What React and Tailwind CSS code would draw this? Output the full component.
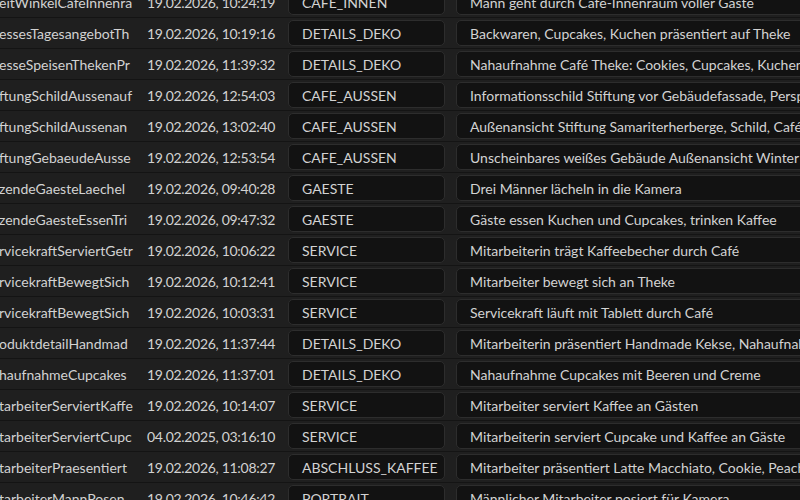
import React from 'react';

const rows = [
  ['eitWinkelCafeInnenra', '19.02.2026, 10:24:19', 'CAFE_INNEN', 'Mann geht durch Café-Innenraum voller Gäste'],
  ['essesTagesangebotTh', '19.02.2026, 10:19:16', 'DETAILS_DEKO', 'Backwaren, Cupcakes, Kuchen präsentiert auf Theke'],
  ['esseSpeisenThekenPr', '19.02.2026, 11:39:32', 'DETAILS_DEKO', 'Nahaufnahme Café Theke: Cookies, Cupcakes, Kuchen, Getränke'],
  ['ftungSchildAussenauf', '19.02.2026, 12:54:03', 'CAFE_AUSSEN', 'Informationsschild Stiftung vor Gebäudefassade, Perspektive'],
  ['ftungSchildAussenan', '19.02.2026, 13:02:40', 'CAFE_AUSSEN', 'Außenansicht Stiftung Samariterherberge, Schild, Café'],
  ['ftungGebaeudeAusse', '19.02.2026, 12:53:54', 'CAFE_AUSSEN', 'Unscheinbares weißes Gebäude Außenansicht Winter'],
  ['zendeGaesteLaechel', '19.02.2026, 09:40:28', 'GAESTE', 'Drei Männer lächeln in die Kamera'],
  ['zendeGaesteEssenTri', '19.02.2026, 09:47:32', 'GAESTE', 'Gäste essen Kuchen und Cupcakes, trinken Kaffee'],
  ['rvicekraftServiertGetr', '19.02.2026, 10:06:22', 'SERVICE', 'Mitarbeiterin trägt Kaffeebecher durch Café'],
  ['rvicekraftBewegtSich', '19.02.2026, 10:12:41', 'SERVICE', 'Mitarbeiter bewegt sich an Theke'],
  ['rvicekraftBewegtSich', '19.02.2026, 10:03:31', 'SERVICE', 'Servicekraft läuft mit Tablett durch Café'],
  ['oduktdetailHandmad', '19.02.2026, 11:37:44', 'DETAILS_DEKO', 'Mitarbeiterin präsentiert Handmade Kekse, Nahaufnahme'],
  ['haufnahmeCupcakes', '19.02.2026, 11:37:01', 'DETAILS_DEKO', 'Nahaufnahme Cupcakes mit Beeren und Creme'],
  ['tarbeiterServiertKaffe', '19.02.2026, 10:14:07', 'SERVICE', 'Mitarbeiter serviert Kaffee an Gästen'],
  ['tarbeiterServiertCupc', '04.02.2025, 03:16:10', 'SERVICE', 'Mitarbeiterin serviert Cupcake und Kaffee an Gäste'],
  ['tarbeiterPraesentiert', '19.02.2026, 11:08:27', 'ABSCHLUSS_KAFFEE', 'Mitarbeiter präsentiert Latte Macchiato, Cookie, Peach Tea'],
  ['tarbeiterMannPosen', '19.02.2026, 10:46:42', 'PORTRAIT', 'Männlicher Mitarbeiter posiert für Kamera'],
];

function Row({ file, date, category, desc }) {
  return (
    <div className="flex items-center h-[31px] border-b border-[#141414] bg-[#1f1f1f]">
      <div className="w-[137px] shrink-0 overflow-hidden whitespace-nowrap">
        <span className="block ml-[-1px]">{file}</span>
      </div>
      <div className="w-[151px] shrink-0 pl-[10px] whitespace-nowrap tracking-[-0.3px]">{date}</div>
      <div className="w-[157px] shrink-0 h-[26px] flex items-center px-[13px] rounded-[5px] bg-[#121212] border border-[#2d2d2d] whitespace-nowrap">
        {category}
      </div>
      <div className="ml-[11px] w-[460px] shrink-0 h-[26px] flex items-center px-[13px] rounded-[5px] bg-[#121212] border border-[#2d2d2d] whitespace-nowrap overflow-hidden">
        {desc}
      </div>
    </div>
  );
}

export default function App() {
  return (
    <div
      className="w-[800px] h-[500px] overflow-hidden bg-[#1f1f1f] text-[#d2d2d2] text-[14px]"
      style={{ fontFamily: 'Lato, "Open Sans", sans-serif' }}
    >
      <div className="mt-[-13px]">
        {rows.map((r, i) => (
          <Row key={i} file={r[0]} date={r[1]} category={r[2]} desc={r[3]} />
        ))}
      </div>
    </div>
  );
}
